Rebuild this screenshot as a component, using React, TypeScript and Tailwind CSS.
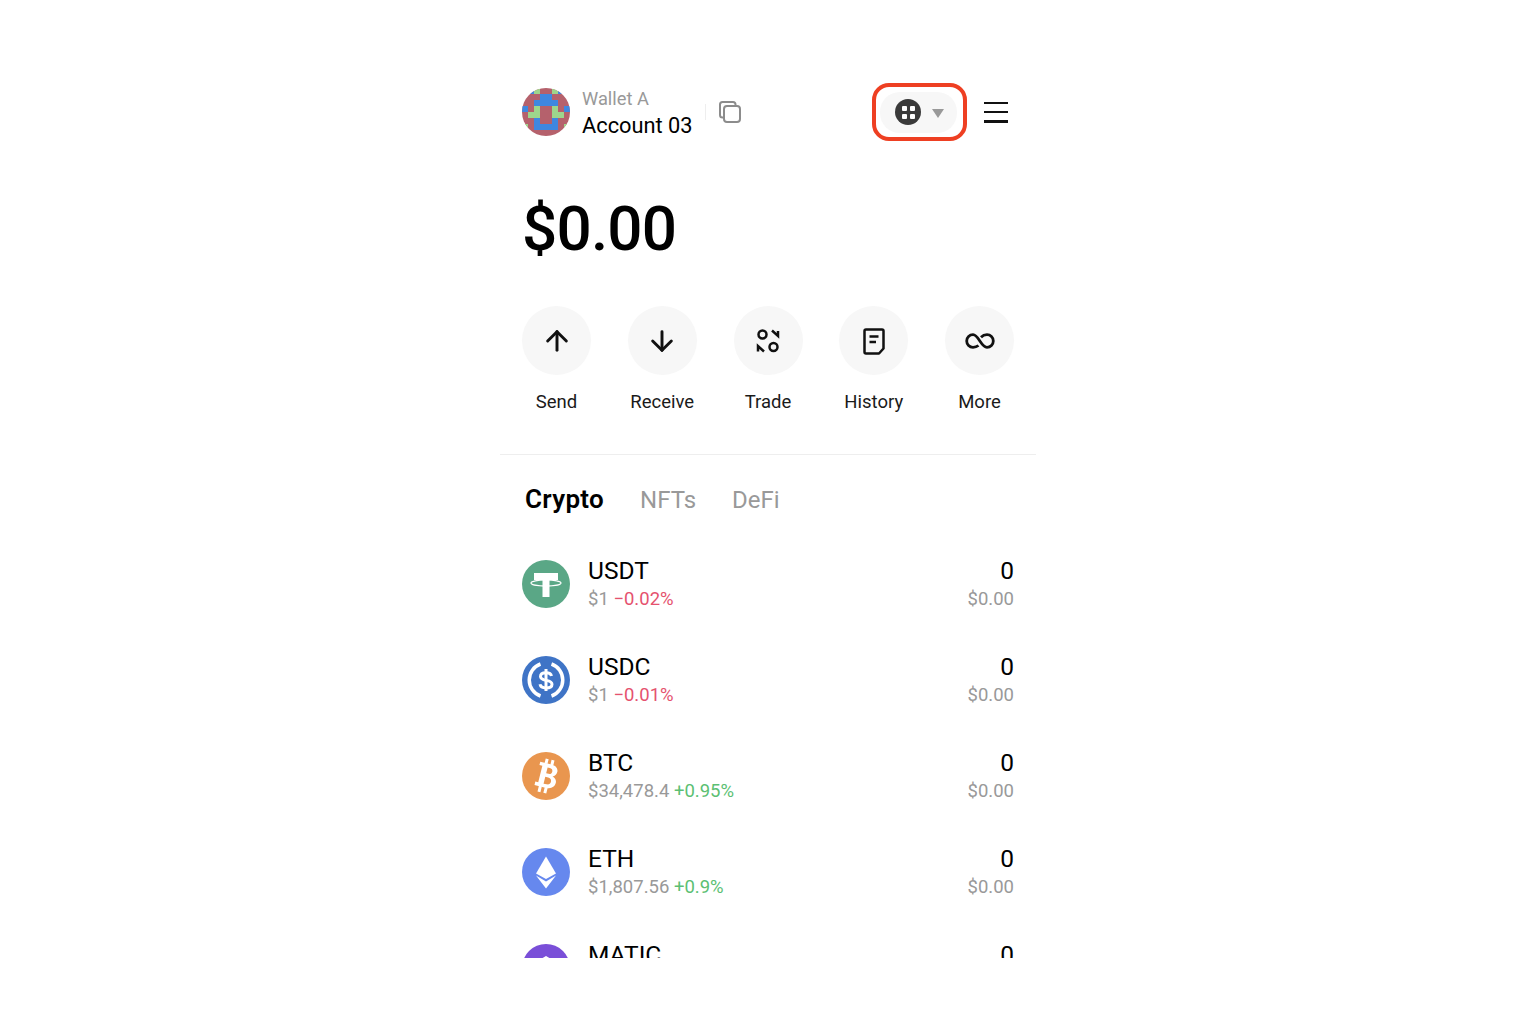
import { ArrowDown, ArrowUp } from 'lucide-react';

const font = { fontFamily: 'Roboto, sans-serif' };

type Coin = { symbol: string; price: string; change: string; up: boolean };

const coins: Coin[] = [
  { symbol: 'USDT', price: '$1', change: '−0.02%', up: false },
  { symbol: 'USDC', price: '$1', change: '−0.01%', up: false },
  { symbol: 'BTC', price: '$34,478.4', change: '+0.95%', up: true },
  { symbol: 'ETH', price: '$1,807.56', change: '+0.9%', up: true },
  { symbol: 'MATIC', price: '$0.66', change: '+1.2%', up: true },
];

// b = blue, g = green, anything else stays the red base
const avatarRows = [
  '.bg..gb.',
  '...bb...',
  '..bbbb..',
  'b.g..g.b',
  '.gg..gg.',
  '..b..b..',
  'g.bbbb.g',
  '........',
];

function Avatar() {
  return (
    <svg width="48" height="48" viewBox="0 0 48 48" className="shrink-0 rounded-full">
      <rect width="48" height="48" fill="#b5616c" />
      {avatarRows.map((row, y) =>
        row.split('').map((c, x) =>
          c === '.' ? null : (
            <rect key={`${x}-${y}`} x={x * 6} y={y * 6} width="6" height="6" fill={c === 'b' ? '#3f87e0' : '#9ed68c'} />
          ),
        ),
      )}
    </svg>
  );
}

function CoinIcon({ symbol }: { symbol: string }) {
  if (symbol === 'USDT') {
    return (
      <svg width="48" height="48" viewBox="0 0 48 48" className="shrink-0">
        <circle cx="24" cy="24" r="24" fill="#5aa786" />
        <path d="M12 13h24v7h-8.500v17h-7V20H12z" fill="#fff" />
        <ellipse cx="24" cy="23" rx="15" ry="3" fill="none" stroke="#fff" strokeWidth="1.200" />
      </svg>
    );
  }
  if (symbol === 'USDC') {
    return (
      <svg width="48" height="48" viewBox="0 0 48 48" className="shrink-0">
        <circle cx="24" cy="24" r="24" fill="#3f74c6" />
        <path d="M18.500 8a17 17 0 0 0 0 32M29.500 8a17 17 0 0 1 0 32" fill="none" stroke="#fff" strokeWidth="3.500" />
        <path d="M29.500 20c-.5-2.300-2.700-3.300-5.500-3.300s-5.500 1.100-5.500 3.800c0 5.500 11.500 2.300 11.500 7.800 0 2.500-2.700 3.700-6 3.700s-5.500-1.200-6-3.700" fill="none" stroke="#fff" strokeWidth="3" />
        <path d="M24 13v22" stroke="#fff" strokeWidth="3" />
      </svg>
    );
  }
  if (symbol === 'BTC') {
    return (
      <svg width="48" height="48" viewBox="0 0 48 48" className="shrink-0">
        <circle cx="24" cy="24" r="24" fill="#e9964f" />
        <g transform="rotate(14 24 24)">
          <path
            fillRule="evenodd"
            d="M15 11.500h11.500c4.500 0 7.500 2.300 7.500 6 0 2.700-1.400 4.500-3.500 5.300 2.900.7 4.700 2.800 4.700 5.700 0 4.300-3.300 7-8.200 7H15v-3.500h3V15h-3zm8.500 3.800v6h2.300c2 0 3.200-1.100 3.200-3s-1.200-3-3.200-3zm0 9.700v7h3c2.300 0 3.700-1.300 3.700-3.500S28.800 25 26.500 25z"
            fill="#fff"
          />
          <path d="M19.500 7h3v5h-3zM25.500 7h3v5h-3zM19.500 35h3v6h-3zM25.500 35h3v6h-3z" fill="#fff" />
        </g>
      </svg>
    );
  }
  if (symbol === 'ETH') {
    return (
      <svg width="48" height="48" viewBox="0 0 48 48" className="shrink-0">
        <circle cx="24" cy="24" r="24" fill="#6688ee" />
        <path d="M24 8.500l10 17L24 31l-10-5.500z" fill="#fff" />
        <path d="M14 27.500L24 33.500l10-6L24 40.500z" fill="#fff" />
      </svg>
    );
  }
  return (
    <svg width="48" height="48" viewBox="0 0 48 48" className="shrink-0">
      <circle cx="24" cy="24" r="24" fill="#7a4fd8" />
      <path d="M24 12l6 3.500v5L24 24l-6-3.500v-5z" fill="#fff" />
    </svg>
  );
}

function Action({ label, children }: { label: string; children: React.ReactNode }) {
  return (
    <div className="flex w-[69px] flex-col items-center">
      <div className="flex h-[69px] w-[69px] items-center justify-center rounded-full bg-[#f7f7f7]">{children}</div>
      <span className="mt-[13px] whitespace-nowrap text-[18.500px] leading-[28px] text-[#1a1a1a]">{label}</span>
    </div>
  );
}

export default function App() {
  return (
    <div className="min-h-[1020px] bg-white" style={font}>
      <div className="mx-auto h-[958px] w-[536px] overflow-hidden">
        {/* Header */}
        <div className="mt-[83px] flex h-[58px] items-center pl-[22px] pr-[28px]">
          <Avatar />
          <div className="ml-3 mt-[3px] flex flex-col">
            <span className="text-[18.300px] leading-[24px] text-[#999]">Wallet A</span>
            <span className="mt-px text-[21.800px] leading-[28px] text-black">Account 03</span>
          </div>
          <div className="ml-3 h-4 w-px bg-[#eee]" />
          <svg width="24" height="24" viewBox="0 0 24 24" fill="none" stroke="#8c8c8c" strokeWidth="2" className="ml-[12px]">
            <path d="M6 17.500H4.500A2.500 2.500 0 0 1 2 15V4.500A2.500 2.500 0 0 1 4.500 2H15a2.500 2.500 0 0 1 2.500 2.500V6" />
            <rect x="6" y="6" width="16" height="16" rx="3" />
          </svg>
          <div className="ml-auto flex items-center">
            <div className="relative flex h-[41px] w-[77px] items-center rounded-[20px] bg-[#f7f7f7] pl-[15px]">
              <div className="pointer-events-none absolute -bottom-2 -left-2 -right-[10px] -top-[9px] rounded-[17px] border-4 border-[#ee3f22]" />
              <div className="grid h-[26px] w-[26px] grid-cols-2 content-center justify-center gap-[3px] rounded-full bg-[#3a3a3a] px-[6.500px]">
                <span className="h-[5px] w-[5px] rounded-[1px] bg-white" />
                <span className="h-[5px] w-[5px] rounded-[1px] bg-white" />
                <span className="h-[5px] w-[5px] rounded-[1px] bg-white" />
                <span className="h-[5px] w-[5px] rounded-[1px] bg-white" />
              </div>
              <svg width="12" height="9" viewBox="0 0 12 9" className="ml-[11px] mt-[2px]">
                <path d="M0 0h12L6 9z" fill="#999" />
              </svg>
            </div>
            <div className="ml-[27px] flex h-[21px] w-6 flex-col justify-between">
              <span className="h-[2.500px] bg-[#111]" />
              <span className="h-[2.500px] bg-[#111]" />
              <span className="h-[2.500px] bg-[#111]" />
            </div>
          </div>
        </div>

        {/* Balance */}
        <div className="mt-[53px] pl-[22px] text-[62px] font-medium leading-[70px] tracking-[-0.800px] text-black">$0.00</div>

        {/* Actions */}
        <div className="mt-[42px] flex justify-between px-[22px]">
          <Action label="Send">
            <ArrowUp size={32} strokeWidth={2.200} color="#111" />
          </Action>
          <Action label="Receive">
            <ArrowDown size={32} strokeWidth={2.200} color="#111" />
          </Action>
          <Action label="Trade">
            <svg width="30" height="30" viewBox="0 0 30 30" fill="none" stroke="#111" strokeWidth="2.500">
              <circle cx="9.500" cy="8.500" r="4" />
              <circle cx="20.500" cy="21" r="4" />
              <path d="M19 4.500l6 5.500V5" />
              <path d="M11 25.500L5 20v5.500" />
            </svg>
          </Action>
          <Action label="History">
            <svg width="30" height="30" viewBox="0 0 30 30" fill="none" stroke="#111" strokeWidth="2.500" strokeLinejoin="round">
              <path d="M7 3.500h16A1.500 1.500 0 0 1 24.500 5v17.500l-4.500 5H7A1.500 1.500 0 0 1 5.500 26V5A1.500 1.500 0 0 1 7 3.500z" />
              <path d="M10.500 10.500h9M10.500 16h6.500" />
            </svg>
          </Action>
          <Action label="More">
            <svg width="32" height="30" viewBox="0 0 32 30" fill="none" stroke="#111" strokeWidth="2.800">
              <path d="M14.500 19.500C13 20.700 11 21.300 9 21.300a6.300 6.300 0 0 1 0-12.600c5.500 0 8 12.600 14 12.600a6.300 6.300 0 0 0 0-12.600c-2.500 0-4.500 1-6 2.500" />
            </svg>
          </Action>
        </div>

        <div className="mt-[38px] h-px bg-[#eeeeee]" />

        {/* Tabs */}
        <div className="mt-[26px] flex items-baseline gap-[36px] pl-[25px] text-[24px] leading-[36px]">
          <span className="text-[26px] font-semibold tracking-[0.3px] text-black">Crypto</span>
          <span className="text-[#999]">NFTs</span>
          <span className="text-[#999]">DeFi</span>
        </div>

        {/* Coin list */}
        <div className="mt-[42px] flex flex-col gap-[48px] px-[22px]">
          {coins.map((c) => (
            <div key={c.symbol} className="flex h-[48px] items-center">
              <CoinIcon symbol={c.symbol} />
              <div className="ml-[18px] flex flex-col">
                <span className="text-[24.500px] leading-[28px] text-black">{c.symbol}</span>
                <span className="mt-[2px] whitespace-pre text-[18.500px] leading-[24px] text-[#999]">
                  {c.price}{' '}
                  <span className={c.up ? 'text-[#5cbf73]' : 'text-[#e5526e]'}>{c.change}</span>
                </span>
              </div>
              <div className="ml-auto flex flex-col items-end">
                <span className="text-[24.500px] leading-[28px] text-black">0</span>
                <span className="mt-[2px] text-[18.500px] leading-[24px] text-[#999]">$0.00</span>
              </div>
            </div>
          ))}
        </div>
      </div>
    </div>
  );
}
